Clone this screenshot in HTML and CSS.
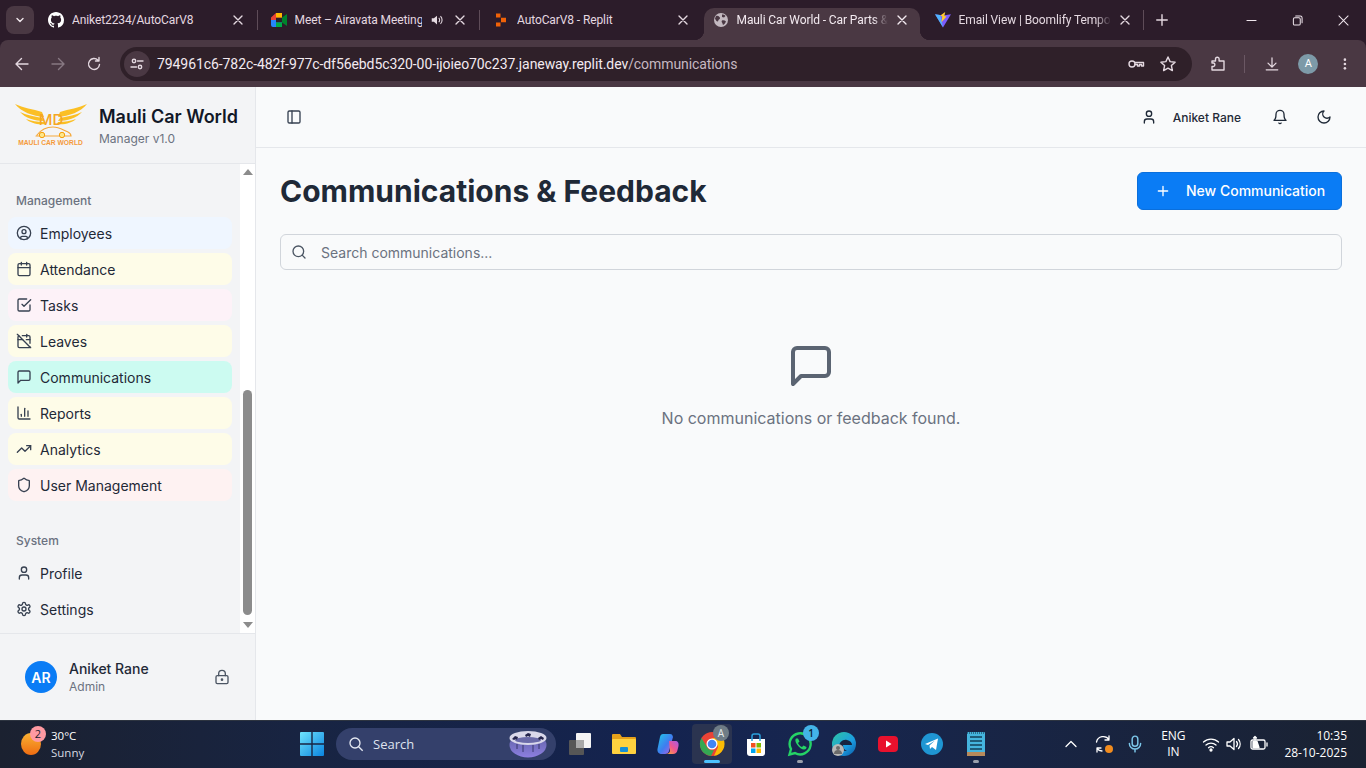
FILE: index.html
```html
<!DOCTYPE html>
<html lang="en">
<head>
<meta charset="utf-8">
<title>Mauli Car World - Communications</title>
<link rel="stylesheet" href="styles.css">
</head>
<body>
<svg class="defs" width="0" height="0" aria-hidden="true">
  <symbol id="i-employees" viewBox="0 0 24 24"><circle cx="12" cy="12" r="10"/><circle cx="12" cy="10" r="3"/><path d="M7 20.662V19a2 2 0 0 1 2-2h6a2 2 0 0 1 2 2v1.662"/></symbol>
  <symbol id="i-calendar" viewBox="0 0 24 24"><path d="M8 2v4M16 2v4"/><rect x="3" y="4" width="18" height="18" rx="2"/><path d="M3 10h18"/></symbol>
  <symbol id="i-check" viewBox="0 0 24 24"><path d="m9 11 3 3L22 4"/><path d="M21 12v7a2 2 0 0 1-2 2H5a2 2 0 0 1-2-2V5a2 2 0 0 1 2-2h11"/></symbol>
  <symbol id="i-caloff" viewBox="0 0 24 24"><path d="M4.2 4.2A2 2 0 0 0 3 6v14a2 2 0 0 0 2 2h14a2 2 0 0 0 1.82-1.18"/><path d="M21 15.5V6a2 2 0 0 0-2-2H9.5"/><path d="M16 2v4"/><path d="M3 10h7"/><path d="M21 10h-5.5"/><path d="m2 2 20 20"/></symbol>
  <symbol id="i-message" viewBox="0 0 24 24"><path d="M21 15a2 2 0 0 1-2 2H7l-4 4V5a2 2 0 0 1 2-2h14a2 2 0 0 1 2 2z"/></symbol>
  <symbol id="i-chart" viewBox="0 0 24 24"><path d="M3 3v16a2 2 0 0 0 2 2h16"/><path d="M18 17V9"/><path d="M13 17V5"/><path d="M8 17v-3"/></symbol>
  <symbol id="i-trend" viewBox="0 0 24 24"><polyline points="22 7 13.5 15.5 8.5 10.5 2 17"/><polyline points="16 7 22 7 22 13"/></symbol>
  <symbol id="i-shield" viewBox="0 0 24 24"><path d="M20 13c0 5-3.5 7.5-7.66 8.95a1 1 0 0 1-.67-.01C7.5 20.5 4 18 4 13V6a1 1 0 0 1 1-1c2 0 4.5-1.2 6.24-2.72a1.17 1.17 0 0 1 1.52 0C14.51 3.81 17 5 19 5a1 1 0 0 1 1 1z"/></symbol>
  <symbol id="i-user" viewBox="0 0 24 24"><path d="M19 21v-2a4 4 0 0 0-4-4H9a4 4 0 0 0-4 4v2"/><circle cx="12" cy="7" r="4"/></symbol>
  <symbol id="i-settings" viewBox="0 0 24 24"><path d="M12.22 2h-.44a2 2 0 0 0-2 2v.18a2 2 0 0 1-1 1.73l-.43.25a2 2 0 0 1-2 0l-.15-.08a2 2 0 0 0-2.73.73l-.22.38a2 2 0 0 0 .73 2.73l.15.1a2 2 0 0 1 1 1.72v.51a2 2 0 0 1-1 1.74l-.15.09a2 2 0 0 0-.73 2.73l.22.38a2 2 0 0 0 2.73.73l.15-.08a2 2 0 0 1 2 0l.43.25a2 2 0 0 1 1 1.73V20a2 2 0 0 0 2 2h.44a2 2 0 0 0 2-2v-.18a2 2 0 0 1 1-1.73l.43-.25a2 2 0 0 1 2 0l.15.08a2 2 0 0 0 2.73-.73l.22-.39a2 2 0 0 0-.73-2.73l-.15-.08a2 2 0 0 1-1-1.74v-.5a2 2 0 0 1 1-1.74l.15-.09a2 2 0 0 0 .73-2.73l-.22-.38a2 2 0 0 0-2.73-.73l-.15.08a2 2 0 0 1-2 0l-.43-.25a2 2 0 0 1-1-1.73V4a2 2 0 0 0-2-2z"/><circle cx="12" cy="12" r="3"/></symbol>
  <symbol id="i-lock" viewBox="0 0 24 24"><circle cx="12" cy="16" r="1"/><rect x="3" y="10" width="18" height="12" rx="2"/><path d="M7 10V7a5 5 0 0 1 10 0v3"/></symbol>
  <symbol id="i-bell" viewBox="0 0 24 24"><path d="M6 8a6 6 0 0 1 12 0c0 7 3 9 3 9H3s3-2 3-9"/><path d="M10.3 21a1.94 1.94 0 0 0 3.4 0"/></symbol>
  <symbol id="i-moon" viewBox="0 0 24 24"><path d="M12 3a6 6 0 0 0 9 9 9 9 0 1 1-9-9Z"/></symbol>
  <symbol id="i-panel" viewBox="0 0 24 24"><rect x="3" y="3" width="18" height="18" rx="2"/><path d="M9 3v18"/></symbol>
  <symbol id="i-plus" viewBox="0 0 24 24"><path d="M5 12h14M12 5v14"/></symbol>
  <symbol id="i-search" viewBox="0 0 24 24"><circle cx="11" cy="11" r="8"/><path d="m21 21-4.3-4.3"/></symbol>
  <symbol id="i-x" viewBox="0 0 24 24"><path d="M6 6l12 12M18 6 6 18"/></symbol>
</svg>

<header class="chrome">
  <div class="tabstrip">
    <button class="tab-menu"><svg class="cicon" width="12" height="12" viewBox="0 0 12 12"><path d="M3 4.5 6 7.5 9 4.5"/></svg></button>
    <div class="tab">
      <svg class="favicon" viewBox="0 0 16 16"><path fill="#fff" d="M8 0C3.58 0 0 3.58 0 8c0 3.54 2.29 6.53 5.47 7.59.4.07.55-.17.55-.38 0-.19-.01-.82-.01-1.49-2.01.37-2.53-.49-2.69-.94-.09-.23-.48-.94-.82-1.13-.28-.15-.68-.52-.01-.53.63-.01 1.08.58 1.23.82.72 1.21 1.87.87 2.33.66.07-.52.28-.87.51-1.07-1.78-.2-3.64-.89-3.64-3.95 0-.87.31-1.59.82-2.15-.08-.2-.36-1.02.08-2.12 0 0 .67-.21 2.2.82.64-.18 1.32-.27 2-.27s1.36.09 2 .27c1.53-1.04 2.2-.82 2.2-.82.44 1.1.16 1.92.08 2.12.51.56.82 1.27.82 2.15 0 3.07-1.87 3.75-3.65 3.95.29.25.54.73.54 1.48 0 1.07-.01 1.93-.01 2.2 0 .21.15.46.55.38A8.01 8.01 0 0 0 16 8c0-4.42-3.58-8-8-8z"/></svg>
      <span class="tab-title">Aniket2234/AutoCarV8</span>
      <svg class="tab-close"><use href="#i-x"/></svg>
    </div>
    <i class="tab-sep"></i>
    <div class="tab">
      <svg class="favicon" viewBox="0 0 16 16"><path d="M0 5.500 5 1h6v4.500H5V8H0z" fill="#ea4335"/><path d="M0 8h5v2.500h6V15H2a2 2 0 0 1-2-2z" fill="#2684fc"/><rect x="5" y="1" width="6" height="4.500" fill="#ffba00"/><rect x="5" y="10.500" width="6" height="4.500" fill="#00ac47"/><path d="M11 5.500 16 2v12l-5-3.500z" fill="#00832d"/></svg>
      <span class="tab-title">Meet – Airavata Meeting</span>
      <svg class="tab-audio" viewBox="0 0 16 16"><path d="M2 6h2.500L8 3v10L4.500 10H2z" fill="#e6dbe2"/><path d="M10 5.500a3.500 3.500 0 0 1 0 5M12 3.500a6.500 6.500 0 0 1 0 9" fill="none" stroke="#e6dbe2" stroke-width="1.200"/></svg>
      <svg class="tab-close"><use href="#i-x"/></svg>
    </div>
    <i class="tab-sep"></i>
    <div class="tab">
      <svg class="favicon" viewBox="0 0 16 16"><path fill="#f26207" d="M3 1.500h4.500v4H3zM8 5.800h5v4.400H8zM3 10.500h4.500v4H3z"/></svg>
      <span class="tab-title">AutoCarV8 - Replit</span>
      <svg class="tab-close"><use href="#i-x"/></svg>
    </div>
    <div class="tab tab-active">
      <svg class="favicon" viewBox="0 0 16 16"><circle cx="8" cy="8" r="7" fill="#c3b9c0"/><path fill="#4a3843" d="M3 4c1.500-.5 2.500 0 3.500 1s.5 2-.5 2.500-.5 2-1.500 2S2.500 7.500 2 6.500zM9 2.500c1.500 0 3 .5 3.500 1.500L11 5.500 9 5zM9 8.500c1.500-.5 3 0 4 1-.5 1.500-2 3-3 3.500-.5-1-.5-2-1-2.500s-.5-1.500 0-2z"/></svg>
      <span class="tab-title tab-fade">Mauli Car World - Car Parts &amp;</span>
      <svg class="tab-close"><use href="#i-x"/></svg>
    </div>
    <div class="tab">
      <svg class="favicon" viewBox="0 0 18 18"><path fill="#7c5cfc" d="M0 2.500 9 4l9-1.500L9 17.500z"/><path fill="#41d1ff" d="M0 2.500 6 3.500 9 17.500z" opacity=".75"/><path fill="#ffcb2e" d="M11.500 0 6 4l2.200 1-1 6.500L13 5l-2.500-.5z"/></svg>
      <span class="tab-title tab-fade">Email View | Boomlify Tempo</span>
      <svg class="tab-close"><use href="#i-x"/></svg>
    </div>
    <i class="tab-sep"></i>
    <svg class="newtab cicon" viewBox="0 0 16 16"><path d="M8 2v12M2 8h12"/></svg>
    <div class="winctl">
      <svg class="cicon" viewBox="0 0 12 12"><path d="M1 6h10"/></svg>
      <svg class="cicon" viewBox="0 0 12 12"><rect x="1.500" y="3" width="7.500" height="8" rx="1.500"/><path d="M4 1h5a2 2 0 0 1 2 2v5.500"/></svg>
      <svg class="cicon" viewBox="0 0 12 12"><path d="M1 1l10 10M11 1 1 11"/></svg>
    </div>
  </div>
  <div class="toolbar">
    <svg class="tb-icon cicon" viewBox="0 0 16 16"><path d="M14 8H2.500M7.500 2.500 2 8l5.500 5.500"/></svg>
    <svg class="tb-icon cicon tb-dim" viewBox="0 0 16 16"><path d="M2 8h11.500M8.500 2.500 14 8l-5.500 5.500"/></svg>
    <svg class="tb-icon cicon" viewBox="0 0 16 16"><path d="M13.500 8.500A5.500 5.500 0 1 1 12 4.200M13 1.500v3.500H9.500"/></svg>
    <div class="omnibox">
      <span class="site-chip"><svg class="cicon" width="14" height="14" viewBox="0 0 14 14"><circle cx="4" cy="4" r="1.700"/><path d="M7.500 4H13M1 10h5.500"/><circle cx="10" cy="10" r="1.700"/></svg></span>
      <span class="url">794961c6-782c-482f-977c-df56ebd5c320-00-ijoieo70c237.janeway.replit.dev<span class="url-path">/communications</span></span>
      <svg class="omni-icon cicon" viewBox="0 0 18 18"><circle cx="5" cy="9" r="3"/><path d="M8 7.500h8.500v3.500h-2V9.500h-2V11h-2V9.500H8"/></svg>
      <svg class="omni-icon cicon" viewBox="0 0 18 18"><path d="m9 2 2.100 4.600 5 .6-3.700 3.400 1 5L9 13.100l-4.400 2.500 1-5-3.700-3.400 5-.6z"/></svg>
    </div>
    <svg class="tb-icon cicon tb-ext" viewBox="0 0 18 18"><path d="M3 6h3.500V4a1.800 1.800 0 0 1 3.600 0v2H15v9H3v-3.500h1.500a1.800 1.800 0 0 0 0-3.500H3z"/></svg>
    <i class="tb-sep"></i>
    <svg class="tb-icon cicon" viewBox="0 0 18 18"><path d="M9 2v10M4.500 8 9 12.500 13.500 8M2.500 15.500h13"/></svg>
    <span class="avatar-a">A</span>
    <svg class="tb-icon tb-dots" viewBox="0 0 16 16"><circle cx="8" cy="3" r="1.500"/><circle cx="8" cy="8" r="1.500"/><circle cx="8" cy="13" r="1.500"/></svg>
  </div>
</header>

<div class="app">
  <aside class="sidebar">
    <div class="brand">
      <svg class="logo" viewBox="0 0 72 44">
        <g fill="#fbbf24">
          <path d="M0 1c8 4 18 5 27 8l2 5C18 13 6 9 0 1z"/>
          <path d="M5 9c6 3 14 4 22 6l2 3C20 18 10 15 5 9z"/>
          <path d="M11 16c5 2 11 3 18 3l1 2c-7 1-15-1-19-5z"/>
          <path d="M72 1c-8 4-18 5-27 8l-2 5c11-1 23-5 29-13z"/>
          <path d="M67 9c-6 3-14 4-22 6l-2 3c9 0 19-3 24-9z"/>
          <path d="M61 16c-5 2-11 3-18 3l-1 2c7 1 15-1 19-5z"/>
        </g>
        <text x="36" y="22" class="logo-md">MD</text>
        <path class="logo-car" d="M22 32c3-4 9-8 16-8 6 0 10 3 15 5 2 1 3 2 3 4H50M44 33H30M24 33h-3"/>
        <circle class="logo-wheel" cx="27" cy="32" r="2.700"/>
        <circle class="logo-wheel" cx="47" cy="32" r="2.700"/>
        <text x="35.500" y="42" class="logo-name">MAULI CAR WORLD</text>
      </svg>
      <div class="brand-text">
        <div class="brand-name">Mauli Car World</div>
        <div class="brand-sub">Manager v1.0</div>
      </div>
    </div>
    <div class="side-scroll">
      <nav class="nav">
        <div class="nav-label">Management</div>
        <a class="nav-item c-blue"><svg class="ic16"><use href="#i-employees"/></svg>Employees</a>
        <a class="nav-item c-yellow"><svg class="ic16"><use href="#i-calendar"/></svg>Attendance</a>
        <a class="nav-item c-pink"><svg class="ic16"><use href="#i-check"/></svg>Tasks</a>
        <a class="nav-item c-yellow"><svg class="ic16"><use href="#i-caloff"/></svg>Leaves</a>
        <a class="nav-item c-teal"><svg class="ic16"><use href="#i-message"/></svg>Communications</a>
        <a class="nav-item c-yellow"><svg class="ic16"><use href="#i-chart"/></svg>Reports</a>
        <a class="nav-item c-yellow"><svg class="ic16"><use href="#i-trend"/></svg>Analytics</a>
        <a class="nav-item c-red"><svg class="ic16"><use href="#i-shield"/></svg>User Management</a>
        <div class="nav-label nav-label-sys">System</div>
        <a class="nav-item"><svg class="ic16"><use href="#i-user"/></svg>Profile</a>
        <a class="nav-item"><svg class="ic16"><use href="#i-settings"/></svg>Settings</a>
      </nav>
      <div class="scrollbar">
        <i class="arrow-up"></i>
        <i class="thumb"></i>
        <i class="arrow-down"></i>
      </div>
    </div>
    <div class="side-user">
      <span class="avatar">AR</span>
      <div class="user-text">
        <div class="user-name">Aniket Rane</div>
        <div class="user-role">Admin</div>
      </div>
      <svg class="ic16 user-lock"><use href="#i-lock"/></svg>
    </div>
  </aside>

  <main class="main">
    <div class="topbar">
      <svg class="ic16 top-panel"><use href="#i-panel"/></svg>
      <div class="top-right">
        <svg class="ic16"><use href="#i-user"/></svg>
        <span class="top-name">Aniket Rane</span>
        <svg class="ic16 top-bell"><use href="#i-bell"/></svg>
        <svg class="ic16 top-moon"><use href="#i-moon"/></svg>
      </div>
    </div>
    <div class="content">
      <div class="page-head">
        <h1>Communications &amp; Feedback</h1>
        <button class="btn-new"><svg class="ic16"><use href="#i-plus"/></svg><span class="btn-label">New Communication</span></button>
      </div>
      <label class="search">
        <svg class="ic16"><use href="#i-search"/></svg>
        <span>Search communications...</span>
      </label>
      <div class="empty">
        <svg class="empty-icon"><use href="#i-message"/></svg>
        <p>No communications or feedback found.</p>
      </div>
    </div>
  </main>
</div>

<footer class="taskbar">
  <div class="weather">
    <span class="sun"><b class="sun-badge">2</b></span>
    <div class="weather-text"><div>30°C</div><div>Sunny</div></div>
  </div>
  <div class="tb-app">
    <svg width="24" height="24" viewBox="0 0 24 24"><defs><linearGradient id="w" x1="0" y1="0" x2="1" y2="1"><stop offset="0" stop-color="#6fe3fb"/><stop offset="1" stop-color="#0a84e0"/></linearGradient></defs><path fill="url(#w)" d="M0 1a1 1 0 0 1 1-1h10.300v11.300H0zM12.700 0H23a1 1 0 0 1 1 1v10.300H12.700zM0 12.700h11.300V24H1a1 1 0 0 1-1-1zM12.700 12.700H24V23a1 1 0 0 1-1 1H12.700z"/></svg>
  </div>
  <div class="searchpill">
    <svg class="pill-icon" viewBox="0 0 24 24"><circle cx="10.500" cy="10.500" r="7.500"/><path d="m16 16 6 6"/></svg>
    <span>Search</span>
    <svg class="pill-art" width="38" height="28" viewBox="0 0 38 28"><defs><linearGradient id="p" x1="0" y1="0" x2="0" y2="1"><stop offset="0" stop-color="#5b5f9f"/><stop offset="1" stop-color="#8d7fe0"/></linearGradient></defs><ellipse cx="19" cy="15" rx="18.500" ry="12.500" fill="url(#p)"/><ellipse cx="19" cy="8" rx="18.500" ry="7" fill="#d9d8ea"/><ellipse cx="19" cy="10" rx="13" ry="3" fill="#6a6aa8"/><path fill="#24244c" d="M3 9l3-3 3 1-1 3-1-1-2 1zM16 5l3-2 3 1-1 3-2-1-2 1zM29 8l3-2 3 2-1 2-2-1-2 1z"/><path stroke="#2a2a55" stroke-width=".8" d="M8 14v5M14 15v7M24 15v7M30 14v5"/></svg>
  </div>
  <div class="tb-app">
    <svg width="24" height="24" viewBox="0 0 24 24"><rect x="8" y="1" width="15" height="15" rx="1" fill="#f4f4f4"/><rect x="1" y="8" width="15" height="15" rx="1" fill="#565656"/><rect x="8" y="8" width="8" height="8" fill="#a8a8a8"/></svg>
  </div>
  <div class="tb-app">
    <svg width="24" height="24" viewBox="0 0 24 24"><path fill="#e6a11a" d="M0 3a1 1 0 0 1 1-1h7l2 3h13a1 1 0 0 1 1 1v3H0z"/><rect y="7" width="24" height="15" rx="1" fill="#ffd23f"/><rect x="8" y="15" width="8" height="5" rx="1" fill="#1590d8"/></svg>
  </div>
  <div class="tb-app">
    <svg width="24" height="24" viewBox="0 0 24 24"><defs><linearGradient id="c1" x1="0" y1="0" x2="1" y2="1"><stop offset="0" stop-color="#1ec8e8"/><stop offset=".55" stop-color="#3f7cf0"/><stop offset="1" stop-color="#c05be0"/></linearGradient><linearGradient id="c2" x1="0" y1="1" x2="1" y2="0"><stop offset="0" stop-color="#f9b233"/><stop offset=".5" stop-color="#f0568f"/><stop offset="1" stop-color="#a55be8"/></linearGradient></defs><path fill="url(#c1)" d="M7 2h7c2 0 2.500 1 3 3l-4 14c-.5 2-2 3-4 3H6C3 22 1 20 1.500 17L4 5c.4-2 1.500-3 3-3z"/><path fill="url(#c2)" d="M13 9h6c3 0 4 2 3.500 5l-1 4c-.5 2.500-2 4-4.500 4h-7c2 0 3.500-1 4-3z"/></svg>
  </div>
  <div class="tb-app tb-active">
    <svg width="26" height="26" viewBox="0 0 26 26"><circle cx="13" cy="13" r="12" fill="#ea4335"/><path fill="#fbbc04" d="M13 7h11a12 12 0 0 1-9 17.800L19 16a6 6 0 0 0-1-3z"/><path fill="#34a853" d="M2.500 7 8 16a6 6 0 0 0 7 3l-3 6A12 12 0 0 1 2.500 7z"/><circle cx="13" cy="13" r="5.500" fill="#fff"/><circle cx="13" cy="13" r="4.300" fill="#4285f4"/></svg>
    <b class="tb-profile">A</b>
    <i class="run-active"></i>
  </div>
  <div class="tb-app">
    <svg width="24" height="24" viewBox="0 0 24 24"><path fill="#fff" d="M3 7h18v14a3 3 0 0 1-3 3H6a3 3 0 0 1-3-3z"/><path fill="none" stroke="#2aa0dc" stroke-width="1.500" d="M8 9V4a2 2 0 0 1 2-2h4a2 2 0 0 1 2 2v5"/><rect x="7" y="11" width="4.500" height="4.500" fill="#f25022"/><rect x="12.500" y="11" width="4.500" height="4.500" fill="#7fba00"/><rect x="7" y="16.500" width="4.500" height="4.500" fill="#00a4ef"/><rect x="12.500" y="16.500" width="4.500" height="4.500" fill="#ffb900"/></svg>
  </div>
  <div class="tb-app">
    <svg width="26" height="26" viewBox="0 0 26 26"><path fill="none" stroke="#25d366" stroke-width="2.400" d="M2.500 23.500 4 18A10.500 10.500 0 1 1 8 22z"/><path fill="#25d366" d="M9 7.500c-1 1-1 3 1 6s5 5 7 5 2.500-1 2.500-2.500L16.500 14.500l-1.500 1.500c-1.500-.5-3.500-2.500-4-4l1.500-1.500L11 7.500z"/></svg>
    <b class="tb-count">1</b>
    <i class="run-dot"></i>
  </div>
  <div class="tb-app">
    <svg width="26" height="26" viewBox="0 0 26 26"><defs><linearGradient id="e" x1="0" y1="0" x2="1" y2="1"><stop offset="0" stop-color="#2fc6a0"/><stop offset=".6" stop-color="#1b9de2"/><stop offset="1" stop-color="#0c59a4"/></linearGradient></defs><circle cx="13" cy="13" r="12" fill="url(#e)"/><path fill="#16233f" d="M8 16c0-5 4-8 8-7 3 .5 5 2.500 5 5h-9c0 2 1 5 4 6-4 0-8-1-8-4z"/><circle cx="7" cy="19" r="6" fill="#b8b8b8"/><circle cx="7" cy="17" r="2" fill="#6a6a6a"/><path fill="#6a6a6a" d="M3 23a4 4 0 0 1 8 0z"/></svg>
    <i class="run-dot run-dot-off"></i>
  </div>
  <div class="tb-app">
    <svg width="24" height="24" viewBox="0 0 24 24"><rect x="2" y="4" width="20" height="16" rx="4" fill="#e8112d"/><path fill="#fff" d="m10 8.500 5.500 3.500-5.500 3.500z"/></svg>
  </div>
  <div class="tb-app">
    <svg width="24" height="24" viewBox="0 0 24 24"><circle cx="12" cy="12" r="11" fill="#1f96d3"/><path fill="#fff" d="M5 12 18 6.500 16 18l-4-3-2 2-.5-3.500 5.500-5-7 4.500z"/></svg>
  </div>
  <div class="tb-app">
    <svg width="22" height="26" viewBox="0 0 22 26"><rect x="2" y="1" width="18" height="24" rx="1" fill="#45b4de"/><rect x="2" y="21" width="18" height="4" fill="#b78a5c"/><path stroke="#123f5a" stroke-width="1.500" d="M5 6h12M5 10h12M5 14h12M5 18h12"/><path stroke="#0d3145" stroke-width="1" stroke-dasharray="1 1" d="M2 2h18"/></svg>
    <i class="run-dot"></i>
  </div>
  <div class="tray">
    <svg class="tray-ic" viewBox="0 0 16 16"><path d="m3 10.500 5-5 5 5"/></svg>
    <span class="tray-sync">
      <svg class="tray-ic" viewBox="0 0 20 20"><path d="M16 5.500A7 7 0 0 0 3.500 8M16 2v4h-4M4 14.500A7 7 0 0 0 9 17M4 18v-4h4"/></svg>
      <i class="sync-dot"></i>
    </span>
    <svg class="tray-ic tray-mic" viewBox="0 0 16 16"><rect x="5.500" y="1" width="5" height="9" rx="2.500"/><path d="M3 7.500a5 5 0 0 0 10 0M8 12.500V15"/></svg>
    <div class="tray-lang"><div>ENG</div><div>IN</div></div>
    <svg class="tray-ic tray-wifi" viewBox="0 0 18 18"><path d="M1.500 7a11 11 0 0 1 15 0M4 10a7.500 7.500 0 0 1 10 0M6.500 12.700a4 4 0 0 1 5 0"/><circle cx="9" cy="15" r="1" fill="#fff"/></svg>
    <svg class="tray-ic tray-vol" viewBox="0 0 18 18"><path d="M2 7v4h3l4 3.500v-11L5 7zM11.500 6.500a4 4 0 0 1 0 5M13.500 4.500a7 7 0 0 1 0 9"/></svg>
    <svg class="tray-ic tray-bat" viewBox="0 0 20 18"><rect x="2" y="5" width="14" height="9" rx="1.500"/><path d="M18 8v3"/><path fill="#fff" d="M4 6.500h4l2 6H4z"/><path d="M6 5V1.500M4.500 3 6 1.500 7.500 3"/></svg>
    <div class="clock"><div>10:35</div><div>28-10-2025</div></div>
  </div>
</footer>
</body>
</html>
```

FILE: styles.css
```css
* { box-sizing: border-box; }
html, body { margin: 0; height: 100%; }
body {
  width: 1366px;
  height: 768px;
  overflow: hidden;
  display: flex;
  flex-direction: column;
  font-family: Inter, "Liberation Sans", sans-serif;
  color: #1f2937;
}
.defs { position: absolute; }
svg use, symbol { fill: none; stroke: currentColor; }
.ic16 {
  width: 16px;
  height: 16px;
  flex: none;
  fill: none;
  stroke: currentColor;
  stroke-width: 2;
  stroke-linecap: round;
  stroke-linejoin: round;
}
.cicon {
  flex: none;
  fill: none;
  stroke: currentColor;
  stroke-width: 1.4;
  stroke-linecap: round;
  stroke-linejoin: round;
}

/* browser chrome */
.chrome { flex: none; height: 87px; background: #2c1c2a; font-family: Roboto, "Liberation Sans", sans-serif; }
.tabstrip { height: 40px; display: flex; align-items: flex-end; padding-left: 6px; color: #e4d8e0; }
.tab-menu {
  width: 28px;
  height: 28px;
  margin: 0 2px 6px 0;
  padding: 0;
  border: 0;
  border-radius: 8px;
  background: #4a3843;
  color: #f0e6ed;
  display: flex;
  align-items: center;
  justify-content: center;
}
.tab {
  position: relative;
  width: 219.5px;
  height: 32px;
  display: flex;
  align-items: center;
  gap: 8px;
  padding: 0 10px 8px 12px;
  font-size: 12px;
  border-radius: 10px 10px 0 0;
}
.tab-sep { width: 1px; height: 20px; margin: 0 1px 10px; background: #5e4c58; flex: none; }
.tab-active { background: #4a3843; color: #f3eaf0; width: 216px; margin: 0 0 0 3px; padding-left: 9px; }
.tab-active + .tab { margin-left: 3px; padding-left: 12px; width: 220px; }
.tab-active + .tab + .tab-sep { margin-left: 0; }
.tab-active::before, .tab-active::after {
  content: "";
  position: absolute;
  bottom: 0;
  width: 10px;
  height: 10px;
}
.tab-active::before { left: -10px; background: radial-gradient(circle at 0 0, transparent 10px, #4a3843 10.5px); }
.tab-active::after { right: -10px; background: radial-gradient(circle at 100% 0, transparent 10px, #4a3843 10.5px); }
.favicon { width: 16px; height: 16px; flex: none; }
.tab-title { flex: 1; min-width: 0; white-space: nowrap; overflow: hidden; letter-spacing: -.1px; }
.tab-fade { margin-right: -2px; -webkit-mask-image: linear-gradient(90deg, #000 90%, transparent); mask-image: linear-gradient(90deg, #000 90%, transparent); }
.tab-audio { width: 14px; height: 14px; flex: none; }
.tab-close { width: 16px; height: 16px; flex: none; fill: none; stroke: currentColor; stroke-width: 2; stroke-linecap: round; }
.newtab { width: 14px; height: 14px; margin: 0 0 13px 10px; stroke-width: 1.600; color: #e4d8e0; }
.winctl { margin-left: auto; display: flex; height: 40px; align-items: center; gap: 35px; padding: 0 17px 0 0; color: #f0e6ed; }
.winctl svg { width: 11px; height: 11px; stroke-width: 1.100; }

.toolbar {
  height: 47px;
  display: flex;
  align-items: center;
  padding: 0 14px 0 14px;
  gap: 20px;
  background: #4a3843;
  color: #e4d8e0;
  border-radius: 8px 8px 0 0;
}
.tb-icon { width: 16px; height: 16px; }
.tb-dim { opacity: .4; }
.tb-dots { fill: #e4d8e0; margin-left: 0; width: 14px; height: 14px; }
.omnibox {
  width: 1083px;
  height: 34px;
  margin: 0 0 0 -2px;
  display: flex;
  align-items: center;
  gap: 14px;
  padding: 0 15px 0 4px;
  border-radius: 17px;
  background: #2f2029;
}
.site-chip { width: 26px; height: 26px; border-radius: 13px; background: #4a3843; display: flex; align-items: center; justify-content: center; margin-right: -7px; }
.url { flex: 1; font-size: 14px; color: #f3eaf0; white-space: nowrap; letter-spacing: -.08px; }
.url-path { color: #c6b8c1; }
.omni-icon { width: 18px; height: 18px; }
.tb-ext { margin-left: -3px; width: 18px; height: 18px; }
.tb-sep { width: 1px; height: 18px; background: #6b5864; margin: 0 -1px 0 -3px; }
.avatar-a { width: 20px; height: 20px; border-radius: 50%; background: #7d9aa8; color: #fff; font-size: 11px; display: flex; align-items: center; justify-content: center; margin-left: -2px; }

/* app */
.app { flex: none; height: 633px; display: flex; }
.sidebar { width: 256px; flex: none; display: flex; flex-direction: column; background: #f3f4f6; border-right: 1px solid #e5e7eb; }
.brand { height: 77px; flex: none; display: flex; align-items: center; padding: 0 0 0 15px; gap: 12px; border-bottom: 1px solid #e5e7eb; }
.logo { width: 72px; height: 44px; flex: none; }
.logo-md { font: 500 15px Inter, sans-serif; fill: #f5a623; text-anchor: middle; }
.logo-name { font: 700 6.700px "Liberation Sans", sans-serif; fill: #f59a3a; text-anchor: middle; }
.logo-car { fill: none; stroke: #f5a83a; stroke-width: 1.200; stroke-linecap: round; }
.logo-wheel { fill: #fde68a; stroke: #f59e0b; stroke-width: 1; }
.brand-name { font-size: 18px; font-weight: 600; line-height: 26px; color: #111827; }
.brand-sub { font-size: 12px; line-height: 17px; color: #6b7280; }
.side-scroll { height: 469px; flex: none; display: flex; }
.nav { flex: 1; padding: 28px 8px 0; min-width: 0; }
.nav-label { height: 18px; margin-bottom: 7px; padding-left: 8px; font-size: 12px; font-weight: 500; line-height: 18px; color: #6b7280; }
.nav-label-sys { margin-top: 31px; margin-bottom: 7px; }
.nav-item {
  height: 32px;
  margin-bottom: 4px;
  display: flex;
  align-items: center;
  gap: 8px;
  padding-left: 8px;
  border-radius: 8px;
  font-size: 14px;
  color: #1f2937;
}
.nav-item .ic16 { color: #374151; }
.c-blue { background: #eff6ff; }
.c-yellow { background: #fefce8; }
.c-pink { background: #fdf2f8; }
.c-teal { background: #ccfbf1; }
.c-red { background: #fef2f2; }
.scrollbar { width: 15px; flex: none; background: #fff; display: flex; flex-direction: column; align-items: center; }
.scrollbar i { display: block; flex: none; }
.arrow-up { margin-top: 5px; border: 5px solid transparent; border-top: 0; border-bottom: 6px solid #8c8c8c; }
.thumb { width: 9px; height: 225px; margin-top: 215px; border-radius: 5px; background: #8c8c8c; }
.arrow-down { margin-top: 7px; border: 5px solid transparent; border-bottom: 0; border-top: 6px solid #8c8c8c; }
.side-user { flex: 1; display: flex; align-items: center; gap: 12px; padding: 0 0 0 25px; border-top: 1px solid #e5e7eb; }
.avatar { width: 32px; height: 32px; border-radius: 50%; background: #0a7cf5; color: #fff; font-size: 14px; font-weight: 600; display: flex; align-items: center; justify-content: center; flex: none; }
.user-text { flex: 1; min-width: 0; }
.user-name { font-size: 14px; font-weight: 500; line-height: 19px; color: #1f2937; }
.user-role { font-size: 12px; line-height: 17px; color: #6b7280; }
.user-lock { margin-right: 25px; color: #4b5563; }

.main { flex: 1; min-width: 0; background: #f9fafb; display: flex; flex-direction: column; }
.topbar { height: 61px; flex: none; display: flex; align-items: center; justify-content: space-between; padding: 0 34px 0 30px; border-bottom: 1px solid #e5e7eb; color: #1f2937; }
.top-panel { color: #374151; }
.top-right { display: flex; align-items: center; }
.top-name { margin: 0 31px 0 16px; font-size: 12px; font-weight: 500; }
.top-moon { margin-left: 28px; }
.content { flex: 1; padding: 24px 24px 0; }
.page-head { display: flex; align-items: center; justify-content: space-between; height: 38px; }
h1 { margin: 0; font-size: 30px; font-weight: 700; line-height: 38px; color: #1f2937; }
.btn-new {
  width: 205px;
  height: 38px;
  display: flex;
  align-items: center;
  gap: 15px;
  padding: 0 0 0 17px;
  border: 1px solid #0a6fdc;
  border-radius: 6px;
  background: #0a7cf5;
  color: #fff;
  font: 500 14px Inter, sans-serif;
}
.btn-label { margin-bottom: 1px; }
.search {
  height: 36px;
  margin-top: 24px;
  display: flex;
  align-items: center;
  gap: 14px;
  padding-left: 10px;
  border: 1px solid #d1d5db;
  border-radius: 6px;
  font-size: 14px;
  color: #6b7280;
}
.search .ic16 { color: #4b5563; }
.empty { margin-top: 72px; display: flex; flex-direction: column; align-items: center; }
.empty-icon { width: 48px; height: 48px; fill: none; color: #5b6472; stroke: #5b6472; stroke-width: 2; stroke-linecap: round; stroke-linejoin: round; }
.empty p { margin: 16px 0 0; font-size: 16px; line-height: 24px; color: #6b7280; }

/* taskbar */
.taskbar {
  flex: 1;
  display: flex;
  align-items: center;
  background: linear-gradient(90deg, #1b2130 0, #182442 22%, #14234f 48%, #17264f 60%, #1a2232 100%);
  box-shadow: inset 0 1px 0 #2d3440;
  color: #fff;
  font-family: "Open Sans", "Liberation Sans", sans-serif;
  font-size: 12px;
}
.weather { width: 290px; flex: none; display: flex; align-items: center; padding-left: 21px; gap: 10px; }
.sun { position: relative; width: 20px; height: 22px; border-radius: 50%; background: linear-gradient(#f9b233, #ef6c12); }
.sun-badge { position: absolute; left: 9px; top: -7px; width: 16px; height: 16px; border-radius: 50%; background: #ff9aa2; color: #1b2130; font: 400 11px/16px "Open Sans", sans-serif; text-align: center; }
.weather-text { line-height: 17px; font-size: 11.500px; padding-bottom: 1px; }
.weather-text div:last-child { color: #d6d9e0; }
.tb-app { position: relative; width: 44px; height: 40px; flex: none; display: flex; align-items: center; justify-content: center; border-radius: 4px; }
.searchpill {
  width: 220px;
  height: 32px;
  margin: 0 2px;
  flex: none;
  display: flex;
  align-items: center;
  padding: 0 9px 0 12px;
  gap: 9px;
  border-radius: 16px;
  background: #34406b;
  color: #dfe3ee;
  font-size: 13px;
}
.pill-icon { width: 16px; height: 16px; fill: none; stroke: #e6e9f2; stroke-width: 2; flex: none; }
.pill-art { margin-left: auto; }
.tb-active { width: 40px; margin: 0 2px; background: #2b3450; }
.tb-profile { position: absolute; right: 3px; top: 1px; width: 16px; height: 16px; border-radius: 50%; background: #6f7c86; color: #e8edf0; font: 400 10px/16px "Open Sans", sans-serif; text-align: center; }
.tb-count { position: absolute; right: 3px; top: 1px; width: 16px; height: 16px; border-radius: 50%; background: #43b4e8; color: #10202e; font: 600 10px/16px "Open Sans", sans-serif; text-align: center; }
.run-active { position: absolute; bottom: 1px; left: 12px; width: 16px; height: 3px; border-radius: 2px; background: #4cc2ff; }
.run-dot { position: absolute; bottom: 1px; left: 19px; width: 6px; height: 3px; border-radius: 2px; background: #9aa0ac; }
.run-dot-off { display: none; }
.tray { margin-left: auto; display: flex; align-items: center; padding-right: 19px; }
.tray-ic { width: 16px; height: 16px; flex: none; fill: none; stroke: #fff; stroke-width: 1.300; stroke-linecap: round; stroke-linejoin: round; }
.tray-sync { position: relative; margin-left: 14px; display: flex; }
.tray-sync .tray-ic { width: 20px; height: 20px; }
.sync-dot { position: absolute; right: 0; bottom: 1px; width: 8px; height: 8px; border-radius: 50%; background: #f28c1e; }
.tray-mic { margin-left: 13px; width: 18px; height: 18px; stroke: #7cc7ea; }
.tray-lang { width: 44px; margin-left: 7px; line-height: 16px; text-align: center; font-size: 12px; }
.tray-wifi { margin-left: 7px; width: 18px; height: 18px; }
.tray-vol { margin-left: 5px; width: 18px; height: 18px; }
.tray-bat { margin-left: 6px; width: 20px; height: 18px; }
.clock { margin-left: 15px; line-height: 17px; text-align: right; font-size: 12px; }
```
